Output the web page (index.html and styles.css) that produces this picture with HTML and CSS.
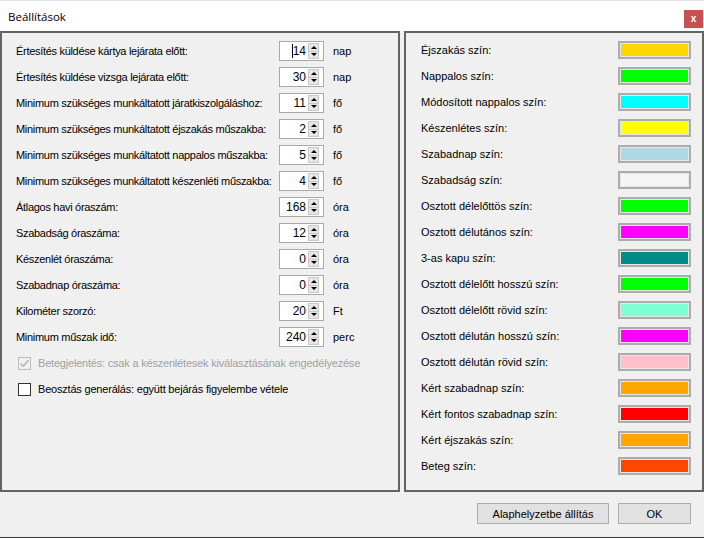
FILE: index.html
```html
<!DOCTYPE html>
<html>
<head>
<meta charset="utf-8">
<link rel="stylesheet" href="styles.css">
</head>
<body>
<div class="window">
  <div class="titlebar">
    <span class="title">Beállítások</span>
    <span class="close">x</span>
  </div>
  <div class="panels">
    <div class="panel left">
      <div class="row"><span class="lbl">Értesítés küldése kártya lejárata előtt:</span><div class="spin"><span class="val"><span class="caret"></span>14</span><span class="btns"><span class="b up"></span><span class="b dn"></span></span></div><span class="unit">nap</span></div>
      <div class="row"><span class="lbl">Értesítés küldése vizsga lejárata előtt:</span><div class="spin"><span class="val">30</span><span class="btns"><span class="b up"></span><span class="b dn"></span></span></div><span class="unit">nap</span></div>
      <div class="row"><span class="lbl">Minimum szükséges munkáltatott járatkiszolgáláshoz:</span><div class="spin"><span class="val">11</span><span class="btns"><span class="b up"></span><span class="b dn"></span></span></div><span class="unit">fő</span></div>
      <div class="row"><span class="lbl">Minimum szükséges munkáltatott éjszakás műszakba:</span><div class="spin"><span class="val">2</span><span class="btns"><span class="b up"></span><span class="b dn"></span></span></div><span class="unit">fő</span></div>
      <div class="row"><span class="lbl">Minimum szükséges munkáltatott nappalos műszakba:</span><div class="spin"><span class="val">5</span><span class="btns"><span class="b up"></span><span class="b dn"></span></span></div><span class="unit">fő</span></div>
      <div class="row"><span class="lbl">Minimum szükséges munkáltatott készenléti műszakba:</span><div class="spin"><span class="val">4</span><span class="btns"><span class="b up"></span><span class="b dn"></span></span></div><span class="unit">fő</span></div>
      <div class="row"><span class="lbl">Átlagos havi óraszám:</span><div class="spin"><span class="val">168</span><span class="btns"><span class="b up"></span><span class="b dn"></span></span></div><span class="unit">óra</span></div>
      <div class="row"><span class="lbl">Szabadság óraszáma:</span><div class="spin"><span class="val">12</span><span class="btns"><span class="b up"></span><span class="b dn"></span></span></div><span class="unit">óra</span></div>
      <div class="row"><span class="lbl">Készenlét óraszáma:</span><div class="spin"><span class="val">0</span><span class="btns"><span class="b up"></span><span class="b dn"></span></span></div><span class="unit">óra</span></div>
      <div class="row"><span class="lbl">Szabadnap óraszáma:</span><div class="spin"><span class="val">0</span><span class="btns"><span class="b up"></span><span class="b dn"></span></span></div><span class="unit">óra</span></div>
      <div class="row"><span class="lbl">Kilométer szorzó:</span><div class="spin"><span class="val">20</span><span class="btns"><span class="b up"></span><span class="b dn"></span></span></div><span class="unit">Ft</span></div>
      <div class="row"><span class="lbl">Minimum műszak idő:</span><div class="spin"><span class="val">240</span><span class="btns"><span class="b up"></span><span class="b dn"></span></span></div><span class="unit">perc</span></div>
      <div class="crow disabled"><span class="cb checked"><svg width="11" height="11" viewBox="0 0 11 11"><path d="M1.5 5.5 L4.2 8.2 L9.5 2.2" fill="none" stroke="#b5b5b5" stroke-width="1.6"/></svg></span><span class="ctext">Betegjelentés: csak a készenlétesek kiválasztásának engedélyezése</span></div>
      <div class="crow"><span class="cb"></span><span class="ctext">Beosztás generálás: együtt bejárás figyelembe vétele</span></div>
    </div>
    <div class="panel right">
      <div class="srow"><span class="slbl">Éjszakás szín:</span><span class="sw"><span class="c" style="background:#ffd700"></span></span></div>
      <div class="srow"><span class="slbl">Nappalos szín:</span><span class="sw"><span class="c" style="background:#00ff00"></span></span></div>
      <div class="srow"><span class="slbl">Módosított nappalos szín:</span><span class="sw"><span class="c" style="background:#00ffff"></span></span></div>
      <div class="srow"><span class="slbl">Készenlétes szín:</span><span class="sw"><span class="c" style="background:#ffff00"></span></span></div>
      <div class="srow"><span class="slbl">Szabadnap szín:</span><span class="sw"><span class="c" style="background:#add8e6"></span></span></div>
      <div class="srow"><span class="slbl">Szabadság szín:</span><span class="sw"><span class="c" style="background:#f5f5f5"></span></span></div>
      <div class="srow"><span class="slbl">Osztott délelőttös szín:</span><span class="sw"><span class="c" style="background:#00ff00"></span></span></div>
      <div class="srow"><span class="slbl">Osztott délutános szín:</span><span class="sw"><span class="c" style="background:#ff00ff"></span></span></div>
      <div class="srow"><span class="slbl">3-as kapu szín:</span><span class="sw"><span class="c" style="background:#008b8b"></span></span></div>
      <div class="srow"><span class="slbl">Osztott délelőtt hosszú szín:</span><span class="sw"><span class="c" style="background:#00ff00"></span></span></div>
      <div class="srow"><span class="slbl">Osztott délelőtt rövid szín:</span><span class="sw"><span class="c" style="background:#7fffd4"></span></span></div>
      <div class="srow"><span class="slbl">Osztott délután hosszú szín:</span><span class="sw"><span class="c" style="background:#ff00ff"></span></span></div>
      <div class="srow"><span class="slbl">Osztott délután rövid szín:</span><span class="sw"><span class="c" style="background:#ffc0cb"></span></span></div>
      <div class="srow"><span class="slbl">Kért szabadnap szín:</span><span class="sw"><span class="c" style="background:#ffa500"></span></span></div>
      <div class="srow"><span class="slbl">Kért fontos szabadnap szín:</span><span class="sw"><span class="c" style="background:#ff0000"></span></span></div>
      <div class="srow"><span class="slbl">Kért éjszakás szín:</span><span class="sw"><span class="c" style="background:#ffa500"></span></span></div>
      <div class="srow"><span class="slbl">Beteg szín:</span><span class="sw"><span class="c" style="background:#ff4500"></span></span></div>
    </div>
  </div>
  <div class="buttons">
    <span class="btn reset">Alaphelyzetbe állítás</span>
    <span class="btn ok">OK</span>
  </div>
</div>
</body>
</html>
```
FILE: styles.css
```css
* { box-sizing: border-box; }
html, body { margin: 0; padding: 0; }
body {
  width: 704px;
  height: 538px;
  overflow: hidden;
  background: #f0f0f0;
  font-family: "Liberation Sans", Arial, sans-serif;
  font-size: 11px;
  color: #000;
}
.window {
  width: 704px;
  height: 538px;
  display: flex;
  flex-direction: column;
  border-bottom: 1px solid #3c3c3c;
}
.titlebar {
  height: 31px;
  background: #fff;
  border-top: 1px solid #e3e3e3;
  display: flex;
  align-items: center;
  justify-content: space-between;
  padding-left: 8px;
  padding-right: 1px;
}
.title {
  font-family: "Open Sans", "Liberation Sans", sans-serif;
  font-size: 11.5px;
  margin-top: 1px;
}
.close {
  width: 19px;
  height: 18px;
  background: #c75050;
  color: #fff;
  font-weight: bold;
  font-size: 10px;
  display: flex;
  align-items: center;
  justify-content: center;
  margin-top: 5px;
}
.panels {
  display: flex;
  gap: 4px;
  height: 461px;
}
.panel {
  border: 2px solid #646464;
  height: 461px;
}
.left {
  width: 400px;
  padding: 8px 0 0 14px;
}
.right {
  width: 300px;
  padding: 7px 0 0 15px;
}
.row {
  display: flex;
  align-items: center;
  height: 20px;
  margin-bottom: 6px;
}
.lbl {
  width: 263px;
  white-space: nowrap;
  letter-spacing: -0.3px;
}
.spin {
  width: 45px;
  height: 20px;
  border: 1px solid #a8a8a8;
  background: #fff;
  display: flex;
  align-items: center;
  padding-right: 4px;
}
.val {
  flex: 1;
  text-align: right;
  padding-right: 2px;
  font-size: 12px;
  display: flex;
  justify-content: flex-end;
  align-items: center;
}
.caret {
  display: inline-block;
  width: 1px;
  height: 14px;
  background: #000;
}
.btns {
  width: 11px;
  height: 16px;
  display: flex;
  flex-direction: column;
}
.b {
  flex: 1;
  background: #e6e6e6;
  border: 1px solid #c8c8c8;
  display: flex;
  align-items: center;
  justify-content: center;
}
.b.up { border-bottom-width: 0; }
.b.up::after {
  content: "";
  border-left: 3px solid transparent;
  border-right: 3px solid transparent;
  border-bottom: 3px solid #000;
}
.b.dn::after {
  content: "";
  border-left: 3px solid transparent;
  border-right: 3px solid transparent;
  border-top: 3px solid #000;
}
.unit {
  margin-left: 9px;
}
.crow {
  display: flex;
  align-items: center;
  height: 20px;
  margin-bottom: 6px;
  padding-left: 2px;
}
.cb {
  width: 13px;
  height: 13px;
  border: 1px solid #333;
  background: #fff;
  display: flex;
  align-items: center;
  justify-content: center;
}
.disabled .cb {
  border-color: #bcbcbc;
  background: #f0f0f0;
}
.disabled .ctext { color: #a0a0a0; }
.ctext {
  margin-left: 7px;
  white-space: nowrap;
  letter-spacing: -0.2px;
}
.srow {
  display: flex;
  align-items: center;
  justify-content: space-between;
  height: 20px;
  margin-bottom: 6px;
  padding-right: 11px;
}
.sw {
  width: 73px;
  height: 18px;
  border: 2px solid #acacac;
  background: #e6e6e6;
  padding: 1px;
  display: flex;
}
.c { flex: 1; }
.buttons {
  display: flex;
  justify-content: flex-end;
  gap: 9px;
  padding-top: 11px;
  padding-right: 13px;
}
.btn {
  height: 21px;
  background: #e1e1e1;
  border: 1px solid #adadad;
  display: flex;
  align-items: center;
  justify-content: center;
  font-size: 11px;
}
.reset { width: 132px; }
.ok { width: 73px; }
```
